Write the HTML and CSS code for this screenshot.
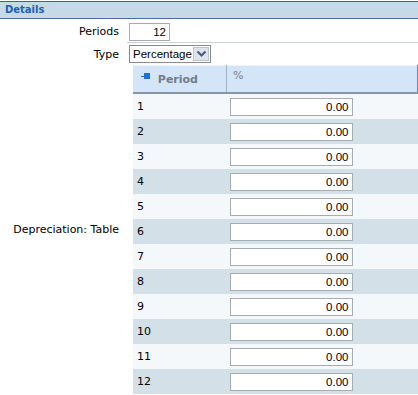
FILE: index.html
```html
<!DOCTYPE html>
<html lang="en">
<head>
    <meta charset="UTF-8">
    <title>Details</title>
    <link rel="stylesheet" href="styles.css">
</head>
<body>
    <div class="section">
        <div class="section-title">Details</div>

        <div class="form">
            <label class="field-label">Periods</label>
            <div class="field-value sep">
                <input type="text" class="text-box periods" value="12">
            </div>

            <label class="field-label">Type</label>
            <div class="field-value">
                <span class="combo">
                    <select class="combo-select">
                        <option>Percentage</option>
                    </select>
                    <span class="combo-btn">
                        <svg width="11" height="8" viewBox="0 0 11 8"><path d="M1.5 1.5 L5.5 5.5 L9.5 1.5" fill="none" stroke="#4a5f86" stroke-width="2.2"/></svg>
                    </span>
                </span>
            </div>

            <label class="field-label">Depreciation: Table</label>
            <div class="field-value">
                <table class="grid">
                    <thead>
                        <tr>
                            <th class="col-period">
                                <svg class="pin" width="9" height="7" viewBox="0 0 9 7"><rect x="3" y="0" width="6" height="6" fill="#1f6fd8"/><rect x="0" y="3" width="4" height="1" fill="#1f6fd8"/></svg>
                                Period
                            </th>
                            <th class="col-pct">%</th>
                        </tr>
                    </thead>
                    <tbody id="rows"></tbody>
                </table>
            </div>
        </div>
    </div>

    <script>
        // fill the period rows
        const rows = document.getElementById('rows');
        for (let i = 1; i <= 12; i++) {
            const tr = document.createElement('tr');
            tr.innerHTML = `<td class="cell-period">${i}</td>
                <td class="cell-pct"><input type="text" class="text-box pct" value="0.00"></td>`;
            rows.appendChild(tr);
        }
    </script>
</body>
</html>
```

FILE: styles.css
```css
body {
    margin: 0;
    font-family: "DejaVu Sans", Verdana, sans-serif;
    font-size: 11px;
    color: #000;
    background-color: #fff;
}

.section {
    padding-top: 1px;
}

.section-title {
    height: 16px;
    line-height: 16px;
    padding-left: 5px;
    background-color: #c5d9e7;
    border-top: 1px solid #3f6296;
    border-bottom: 1px solid #4a6c9e;
    color: #1f5fb8;
    font-weight: bold;
    font-size: 10px;
}

.form {
    display: grid;
    grid-template-columns: 127px 1fr;
}

.field-label {
    align-self: center;
    text-align: right;
    padding-right: 8px;
}

.field-value {
    display: flex;
    align-items: center;
    padding-left: 2px;
}

.field-value.sep {
    height: 23px;
    border-bottom: 1px solid #c9d5d1;
}

.text-box {
    box-sizing: border-box;
    height: 18px;
    border: 1px solid #a5acb2;
    padding: 0 3px 0 2px;
    text-align: right;
    font-family: "Liberation Sans", Arial, sans-serif;
    font-size: 11.5px;
    color: #000;
    background: #fff;
}

.periods {
    width: 41px;
    margin-top: 2px;
}

/* Combo box */
.combo {
    position: relative;
    display: inline-block;
    margin: 2px 0;
    height: 18px;
}

.combo-select {
    appearance: none;
    -webkit-appearance: none;
    box-sizing: border-box;
    width: 82px;
    height: 18px;
    border: 1px solid #8b8b8b;
    border-radius: 0;
    padding: 0 0 0 3px;
    background: #fff;
    font-family: "Liberation Sans", Arial, sans-serif;
    font-size: 11.5px;
    color: #000;
}

.combo-btn {
    position: absolute;
    top: 2px;
    right: 2px;
    box-sizing: border-box;
    width: 16px;
    height: 14px;
    background: #dfe3ea;
    border: 1px solid #b7c6d6;
    display: flex;
    align-items: center;
    justify-content: center;
}

/* Depreciation table */
.grid {
    margin-left: 4px;
    width: 285px;
    border-collapse: collapse;
}

.grid th {
    height: 23px;
    padding: 0;
    background-color: #d5e5f8;
    border-top: 1px solid #eef4fb;
    border-bottom: 2px solid #8795a8;
    color: #737d8a;
    text-align: left;
    vertical-align: middle;
}

.col-period {
    width: 85px;
    padding-left: 8px !important;
    font-weight: bold;
    border-right: 1px solid #a3b1c2;
}

.pin {
    margin-right: 4px;
    vertical-align: 3px;
}

.col-pct {
    font-weight: normal;
    vertical-align: top !important;
    padding: 3px 0 0 6px !important;
    border-right: 1px solid #6f86a6;
}

.grid td {
    height: 25px;
    padding: 0;
}

.grid tbody tr:nth-child(odd) {
    background-color: #f4f8fb;
}

.grid tbody tr:nth-child(even) {
    background-color: #d4e0e8;
}

.cell-period {
    padding-left: 4px !important;
}

.cell-pct {
    padding-left: 3px !important;
}

.pct {
    width: 123px;
    display: block;
}
```
